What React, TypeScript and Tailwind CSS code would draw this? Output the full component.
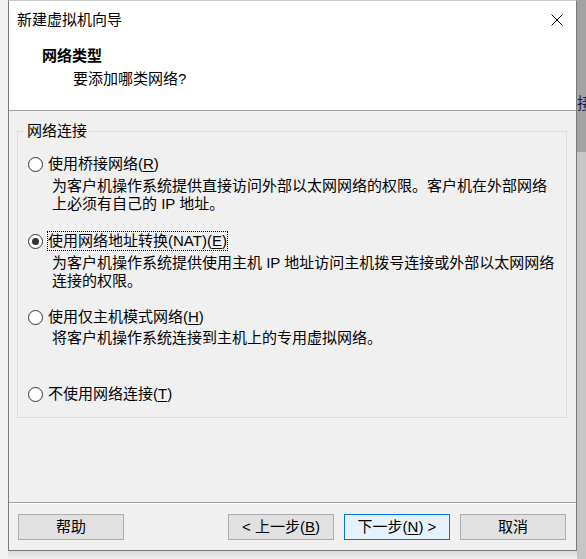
import React from 'react'

const FONT = { fontFamily: '"Liberation Sans", "Noto Sans CJK SC", sans-serif' }

function Radio({ checked, focused, label, mnemonic, suffix }: {
  checked?: boolean
  focused?: boolean
  label: string
  mnemonic: string
  suffix?: string
}): React.ReactElement {
  return (
    <div className="flex items-center h-[20px] gap-[4px]">
      <span className="w-[15px] h-[15px] rounded-full border border-[#333333] bg-white flex items-center justify-center flex-shrink-0">
        {checked && <span className="w-[7px] h-[7px] rounded-full bg-[#333333]" />}
      </span>
      <span
        className={`leading-[18px] border whitespace-nowrap ${focused ? 'border-dotted border-black' : 'border-transparent'}`}
      >
        {label}(<u className="underline-offset-2">{mnemonic}</u>){suffix}
      </span>
    </div>
  )
}

function Button({ children, primary }: { children: React.ReactNode; primary?: boolean }): React.ReactElement {
  return (
    <button
      className={`w-[106px] h-[26px] border text-[15px] leading-[20px] text-black flex items-center justify-center ${
        primary ? 'border-[#0078d7] bg-[#e5f1fb]' : 'border-[#adadad] bg-[#e1e1e1]'
      }`}
    >
      {children}
    </button>
  )
}

export default function App(): React.ReactElement {
  return (
    <div className="w-[586px] h-[559px] flex overflow-hidden bg-[#f0f0f0] text-[15px] text-black" style={FONT}>
      {/* desktop left */}
      <div className="w-[8px] h-full bg-[#f2f2f2]" />

      <div className="w-[569px] flex flex-col">
        {/* Window */}
        <div className="h-[551px] border border-[#7a7a7a] border-t-[#c8c8c8] flex flex-col bg-[#f0f0f0]">
          {/* Header */}
          <div className="h-[110px] bg-white border-b border-[#a0a0a0]">
            <div className="h-[38px] flex items-center justify-between pl-[8px] pr-[13px]">
              <span className="leading-[20px]">新建虚拟机向导</span>
              <svg width="12" height="12" viewBox="0 0 12 12" className="flex-shrink-0">
                <path d="M0.5 0.5L11.5 11.5M11.5 0.5L0.5 11.5" stroke="#000" strokeWidth="1" />
              </svg>
            </div>
            <div className="pl-[33px] mt-[7px] leading-[20px] font-bold">网络类型</div>
            <div className="pl-[64px] mt-[3px] leading-[20px]">要添加哪类网络?</div>
          </div>

          {/* Body */}
          <div className="h-[391px] px-[8px] pt-[10px]">
            <fieldset className="w-[550px] border border-[#dcdcdc]">
              <legend className="ml-[7px] px-[2px] leading-[20px]">网络连接</legend>
              <div className="pt-[13px] pl-[10px] pb-[13px]">
                <Radio label="使用桥接网络" mnemonic="R" />
                <div className="pl-[24px] mt-[3px] leading-[18px] whitespace-nowrap">
                  为客户机操作系统提供直接访问外部以太网网络的权限。客户机在外部网络
                  <br />
                  上必须有自己的 IP 地址。
                </div>

                <div className="mt-[18px]">
                  <Radio checked focused label="使用网络地址转换(NAT)" mnemonic="E" />
                </div>
                <div className="pl-[24px] mt-[3px] leading-[18px] whitespace-nowrap">
                  为客户机操作系统提供使用主机 IP 地址访问主机拨号连接或外部以太网网络
                  <br />
                  连接的权限。
                </div>

                <div className="mt-[17px]">
                  <Radio label="使用仅主机模式网络" mnemonic="H" />
                </div>
                <div className="pl-[24px] mt-[2px] leading-[18px] whitespace-nowrap">
                  将客户机操作系统连接到主机上的专用虚拟网络。
                </div>

                <div className="mt-[37px]">
                  <Radio label="不使用网络连接" mnemonic="T" />
                </div>
              </div>
            </fieldset>
          </div>

          {/* Footer */}
          <div className="h-px bg-[#a0a0a0]" />
          <div className="h-px bg-white" />
          <div className="h-[46px] pt-[10px] pl-[9px] pr-[10px] flex items-start justify-between">
            <Button>帮助</Button>
            <div className="flex gap-[10px]">
              <Button>
                &lt; 上一步(<u className="underline-offset-2">B</u>)
              </Button>
              <Button primary>
                下一步(<u className="underline-offset-2">N</u>) &gt;
              </Button>
              <Button>取消</Button>
            </div>
          </div>
        </div>
        {/* shadow under window */}
        <div className="flex-1 bg-gradient-to-b from-[#dadada] to-[#f0f0f0]" />
      </div>

      {/* desktop right, behind the window */}
      <div className="flex-1 flex flex-col overflow-hidden">
        <div className="h-[152px] bg-[#a3a3a3] pt-[94px] overflow-hidden">
          <div className="leading-[20px] text-[16px] text-[#1b1b4a] whitespace-nowrap">接</div>
        </div>
        <div className="flex-1 bg-[#c6c6c6]" />
      </div>
    </div>
  )
}
